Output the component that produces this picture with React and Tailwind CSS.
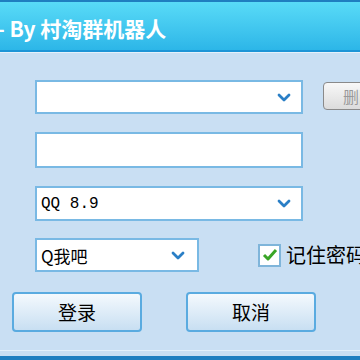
import React from 'react';

const Chevron = () => (
  <svg width="14" height="9" viewBox="0 0 14 9" className="shrink-0">
    <path d="M2 2 L7 7 L12 2" fill="none" stroke="#2a7fc6" strokeWidth="2.8" strokeLinecap="round" strokeLinejoin="round" />
  </svg>
);

const boxCls = 'bg-white border-2 border-[#79b9e4] flex items-center shrink-0';

const App = () => {
  return (
    <div className="w-[360px] h-[360px] overflow-hidden bg-[#c9dff3] flex flex-col" style={{ fontFamily: '"Noto Sans CJK SC", sans-serif' }}>
      {/* title bar */}
      <div className="h-[53px] shrink-0 flex flex-col">
        <div className="h-[2px] bg-[#1f7fc0]" />
        <div className="flex-1 bg-gradient-to-b from-[#58dbf7] to-[#2cb6e8] flex items-center">
          <span className="text-white font-bold text-[21px] leading-none -ml-[3px] mt-[4px] whitespace-nowrap">
            - By 村淘群机器人
          </span>
        </div>
        <div className="h-[2px] bg-[#1d95d6]" />
        <div className="h-[1px] bg-[#e4f1fb]" />
      </div>

      {/* body */}
      <div className="flex-1 flex flex-col pt-[27px]">
        <div className="flex items-start">
          <div className={`${boxCls} ml-[35px] w-[268px] h-[34px] justify-end pr-[10px]`}>
            <Chevron />
          </div>
          <div className="ml-[20px] mt-[2px] w-[60px] h-[28px] shrink-0 rounded-[4px] border border-[#8a8a8a] bg-gradient-to-b from-[#f8f8f8] to-[#dcdcdc] flex items-center pl-[19px]">
            <span className="text-[16px] text-[#9a9a9a] leading-none whitespace-nowrap">删除</span>
          </div>
        </div>

        <div className={`${boxCls} ml-[35px] mt-[18px] w-[268px] h-[36px]`} />

        <div className={`${boxCls} ml-[35px] mt-[18px] w-[268px] h-[35px] justify-between pl-[4px] pr-[10px]`}>
          <span className="text-[16px] text-black leading-none" style={{ fontFamily: '"Liberation Mono", "Noto Sans CJK SC", monospace' }}>QQ 8.9</span>
          <Chevron />
        </div>

        <div className="flex items-center mt-[17px]">
          <div className={`${boxCls} ml-[35px] w-[164px] h-[34px] justify-between pl-[4px] pr-[12px]`}>
            <span className="text-[17px] text-black leading-none">Q我吧</span>
            <Chevron />
          </div>
          <div className="ml-[59px] w-[23px] h-[23px] shrink-0 border-2 border-[#7fb5da] bg-white flex items-center justify-center">
            <svg width="16" height="14" viewBox="0 0 16 14">
              <path d="M2 7 L6 11 L14 2" fill="none" stroke="#3aa527" strokeWidth="3" strokeLinejoin="round" />
            </svg>
          </div>
          <span className="ml-[5px] text-[20px] text-black leading-none whitespace-nowrap">记住密码</span>
        </div>

        <div className="flex mt-[20px]">
          <button className="ml-[12px] w-[130px] h-[40px] shrink-0 rounded-[4px] border-2 border-[#5aabe0] bg-gradient-to-b from-[#f4f9fd] to-[#c8dff2] flex items-center justify-center text-[19px] text-black">
            登录
          </button>
          <button className="ml-[44px] w-[130px] h-[40px] shrink-0 rounded-[4px] border-2 border-[#5aabe0] bg-gradient-to-b from-[#f4f9fd] to-[#c8dff2] flex items-center justify-center text-[19px] text-black">
            取消
          </button>
        </div>

        <div className="flex-1" />
        <div className="h-[1px] bg-[#e4f1fb]" />
        <div className="h-[5px] bg-[#c9dff3]" />
        <div className="h-[4px] bg-[#1f7fc0]" />
      </div>
    </div>
  );
};

export default App;
